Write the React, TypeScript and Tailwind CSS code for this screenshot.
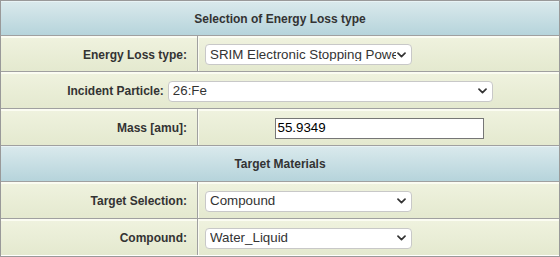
import React from "react";

const Chevron = () => (
  <svg width="9" height="6" viewBox="0 0 9 6" className="shrink-0">
    <path d="M1 1.2 L4.5 4.6 L8 1.2" fill="none" stroke="#333" strokeWidth="1.7" strokeLinecap="round" strokeLinejoin="round" />
  </svg>
);

const Select = ({ text, w }: { text: string; w: string }) => (
  <div className={`${w} h-[21px] flex items-center justify-between bg-white border border-[#c8c8c8] rounded-[4px] pl-[4px] pr-[5px] text-[13.33px] text-[#333] leading-none`}>
    <span className="overflow-hidden whitespace-nowrap flex-1 min-w-0 mr-[1px]">{text}</span>
    <Chevron />
  </div>
);

const HeaderRow = ({ text, h }: { text: string; h: string }) => (
  <div className={`${h} flex items-center justify-center font-bold text-[12px] text-[#333] bg-gradient-to-b from-[#d9e9ec] to-[#b6d4db] border-t border-t-[#e8f3f5]`}>
    {text}
  </div>
);

const rowBg = "bg-gradient-to-b from-[#eff2de] to-[#e4e9cf] border-t-2 border-t-[#fbfcf2]";

const TwoCol = ({ label, children, h, center }: { label: string; children: React.ReactNode; h: string; center?: boolean }) => (
  <div className={`${h} grid grid-cols-[196px_1px_1fr]`}>
    <div className={`${rowBg} flex items-center justify-end pr-[10px] font-bold text-[12px] text-[#333]`}>{label}</div>
    <div className="bg-[#a0a0a0]" />
    <div className={`${rowBg} border-l border-l-[#fbfcf2] flex items-center ${center ? "justify-center" : "pl-[6px]"}`}>{children}</div>
  </div>
);

const Sep = () => <div className="h-px bg-[#a0a0a0]" />;

export default function App() {
  return (
    <div className="w-[560px] h-[257px] bg-white" style={{ fontFamily: '"Liberation Sans", Arial, sans-serif' }}>
      <div className="w-[560px] h-[257px] border border-[#999] flex flex-col overflow-hidden">
        <HeaderRow text="Selection of Energy Loss type" h="h-[34px]" />
        <Sep />
        <TwoCol label="Energy Loss type:" h="h-[35px]">
          <Select text="SRIM Electronic Stopping Power" w="w-[207px]" />
        </TwoCol>
        <Sep />
        <div className={`h-[36px] ${rowBg} flex items-center justify-center gap-[4px]`}>
          <span className="font-bold text-[12px] text-[#333]">Incident Particle:</span>
          <Select text="26:Fe" w="w-[325px]" />
        </div>
        <Sep />
        <TwoCol label="Mass [amu]:" h="h-[36px]" center>
          <div className="w-[209px] h-[21px] bg-white border border-[#767676] flex items-center pl-[2px] text-[13.33px] text-black leading-none">55.9349</div>
        </TwoCol>
        <Sep />
        <HeaderRow text="Target Materials" h="h-[35px]" />
        <Sep />
        <TwoCol label="Target Selection:" h="h-[36px]">
          <Select text="Compound" w="w-[207px]" />
        </TwoCol>
        <Sep />
        <TwoCol label="Compound:" h="h-[36px]">
          <Select text="Water_Liquid" w="w-[207px]" />
        </TwoCol>
      </div>
    </div>
  );
}
